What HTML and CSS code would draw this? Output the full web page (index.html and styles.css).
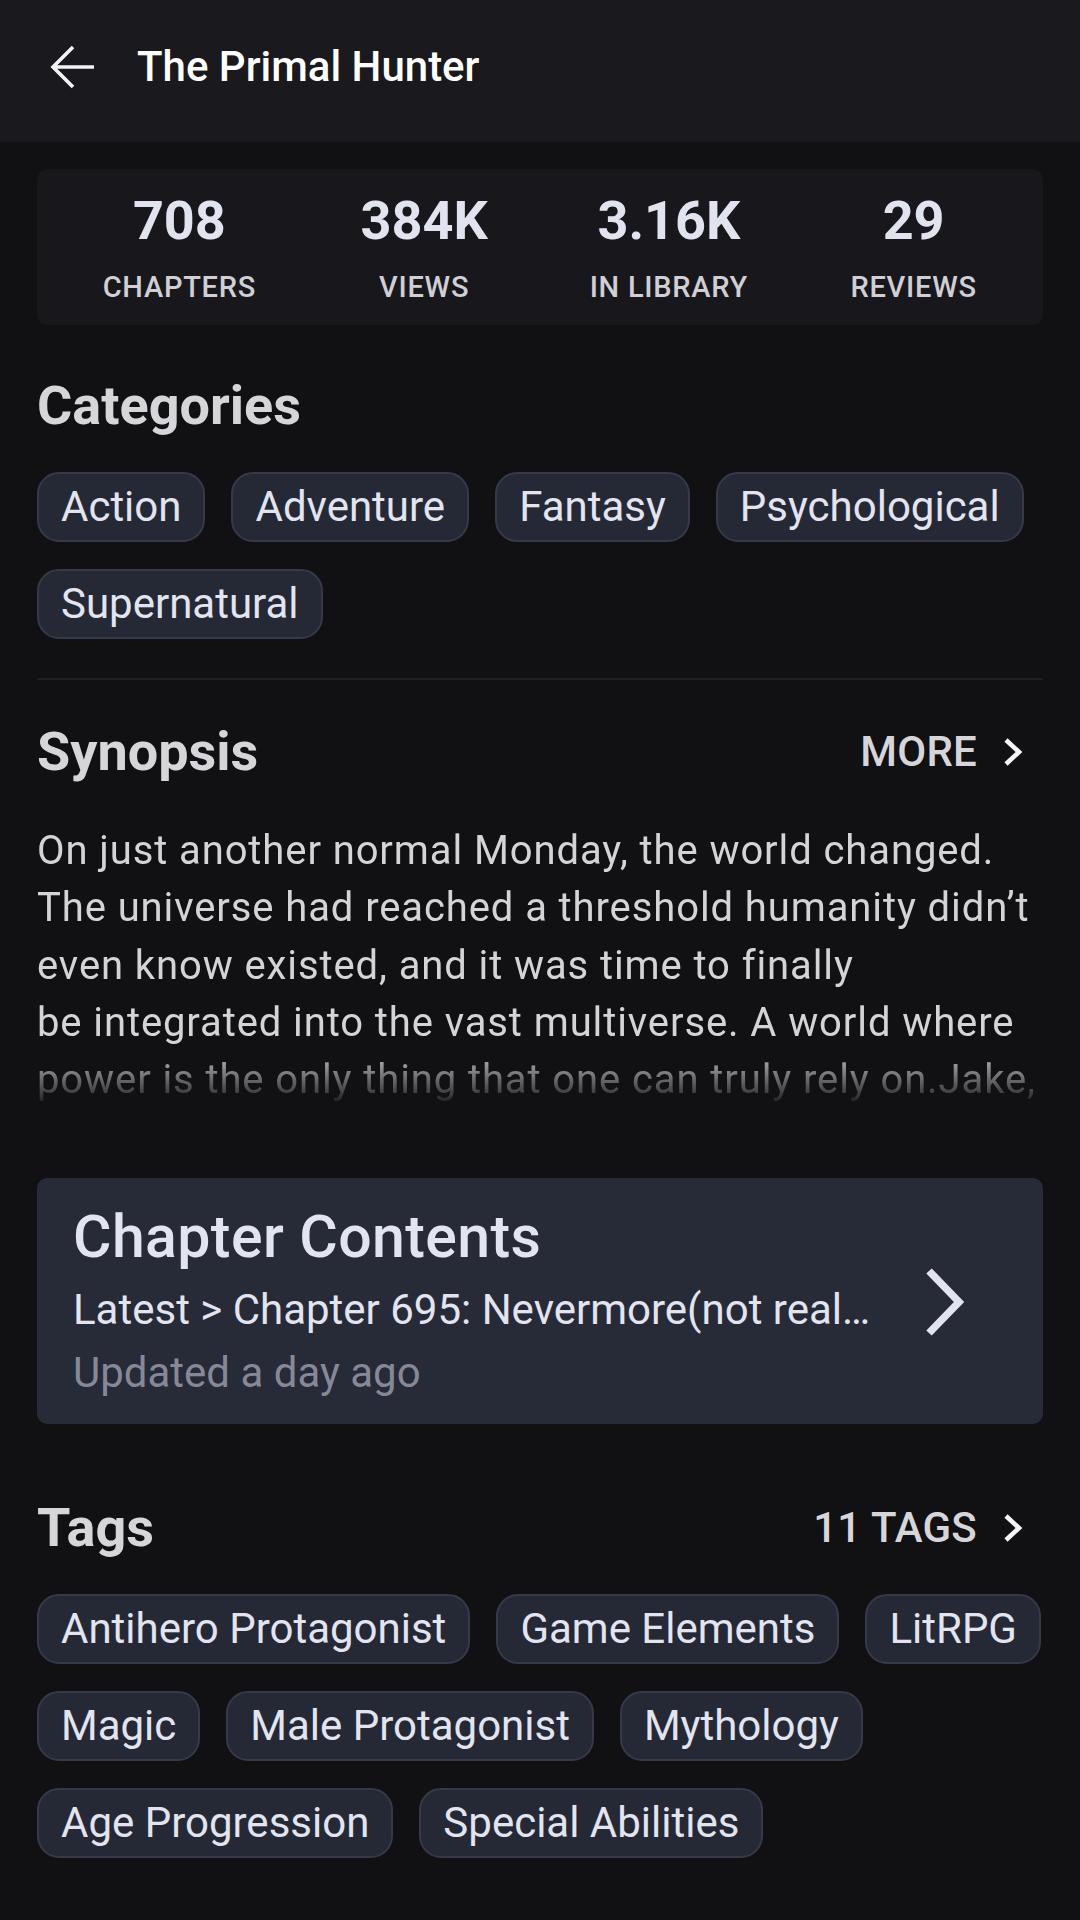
FILE: index.html
```html
<!DOCTYPE html>
<html lang="en">
<head>
<meta charset="utf-8">
<title>The Primal Hunter</title>
<link rel="stylesheet" href="styles.css">
</head>
<body>
<header class="topbar">
  <svg class="back" width="46" height="44" viewBox="0 0 46 44" aria-hidden="true">
    <path d="M3 22 H44 M23 2 L3 22 L23 42" fill="none" stroke="#f4f4f6" stroke-width="3.6" stroke-linejoin="miter"/>
  </svg>
  <h1 class="title">The Primal Hunter</h1>
</header>

<main class="content">
  <section class="stats">
    <div class="stat"><div class="num">708</div><div class="lbl">CHAPTERS</div></div>
    <div class="stat"><div class="num">384K</div><div class="lbl">VIEWS</div></div>
    <div class="stat"><div class="num">3.16K</div><div class="lbl">IN LIBRARY</div></div>
    <div class="stat"><div class="num">29</div><div class="lbl">REVIEWS</div></div>
  </section>

  <h2 class="heading cat-heading">Categories</h2>
  <div class="chips">
    <span class="chip">Action</span>
    <span class="chip">Adventure</span>
    <span class="chip">Fantasy</span>
    <span class="chip">Psychological</span>
    <span class="chip">Supernatural</span>
  </div>

  <hr class="divider">

  <div class="row-head syn-head">
    <h2 class="heading">Synopsis</h2>
    <a class="more">MORE
      <svg width="24" height="32" viewBox="0 0 24 32" aria-hidden="true"><path d="M5 4 L18 16 L5 28" fill="none" stroke="#f4f4f6" stroke-width="4.6"/></svg>
    </a>
  </div>
  <p class="synopsis">On just another normal Monday, the world changed.<br>The universe had reached a threshold humanity didn’t<br>even know existed, and it was time to finally<br>be integrated into the vast multiverse. A world where<br>power is the only thing that one can truly rely on.Jake,</p>

  <section class="chapters">
    <div class="ch-text">
      <div class="ch-title">Chapter Contents</div>
      <div class="ch-latest">Latest &gt; Chapter 695: Nevermore(not real…</div>
      <div class="ch-updated">Updated a day ago</div>
    </div>
    <svg class="ch-arrow" width="48" height="72" viewBox="0 0 48 72" aria-hidden="true"><path d="M8 5 L38 36 L8 67" fill="none" stroke="#e2e4f0" stroke-width="7.5"/></svg>
  </section>

  <div class="row-head tags-head">
    <h2 class="heading">Tags</h2>
    <a class="more">11 TAGS
      <svg width="24" height="32" viewBox="0 0 24 32" aria-hidden="true"><path d="M5 4 L18 16 L5 28" fill="none" stroke="#f4f4f6" stroke-width="4.6"/></svg>
    </a>
  </div>
  <div class="chips">
    <span class="chip">Antihero Protagonist</span>
    <span class="chip">Game Elements</span>
    <span class="chip">LitRPG</span>
    <span class="chip">Magic</span>
    <span class="chip">Male Protagonist</span>
    <span class="chip">Mythology</span>
    <span class="chip">Age Progression</span>
    <span class="chip">Special Abilities</span>
  </div>
</main>
</body>
</html>
```
FILE: styles.css
```css
* { box-sizing: border-box; }
html, body {
  margin: 0;
  padding: 0;
  background: #111013;
  font-family: Roboto, "Noto Sans", sans-serif;
  color: #e2e4f0;
}
body { width: 1080px; min-height: 1920px; }

.topbar {
  height: 142px;
  background: #1a191d;
  display: flex;
  align-items: center;
  padding: 0 0 8px 50px;
}
.back { display: block; flex: none; }
.title {
  margin: 0 0 0 41px;
  font-size: 42px;
  font-weight: 500;
  color: #ffffff;
  line-height: 48px;
}

.content { padding: 0 37px; }

.stats {
  margin-top: 27px;
  background: #18171b;
  border-radius: 10px;
  display: grid;
  grid-template-columns: repeat(4, 1fr);
  padding: 22px 7px 21px 20px;
}
.stat { text-align: center; }
.num {
  font-size: 54px;
  font-weight: 700;
  line-height: 60px;
  color: #e1e3ee;
}
.lbl {
  margin-top: 19px;
  font-size: 29px;
  font-weight: 500;
  letter-spacing: 0.75px;
  line-height: 34px;
  color: #cfcfd5;
}

.heading {
  margin: 0;
  font-size: 54px;
  font-weight: 700;
  line-height: 60px;
  color: #d6d6da;
}
.cat-heading { margin-top: 51px; }

.chips {
  margin-top: 36px;
  display: flex;
  flex-wrap: wrap;
  gap: 27px 26px;
}
.chip {
  display: inline-block;
  height: 70px;
  padding: 9px 22px;
  border: 2px solid #363a48;
  border-radius: 22px;
  background: #252935;
  font-size: 42px;
  line-height: 48px;
  color: #e2e4f0;
  white-space: nowrap;
}

.divider {
  margin: 39px 0 0;
  border: 0;
  height: 2px;
  background: #211f24;
}

.row-head {
  display: flex;
  align-items: center;
  justify-content: space-between;
}
.syn-head { margin-top: 42px; }
.tags-head { margin-top: 74px; }
.more {
  display: flex;
  align-items: center;
  gap: 24px;
  padding-right: 18px;
  font-size: 42px;
  font-weight: 500;
  letter-spacing: 0.2px;
  line-height: 48px;
  color: #d6d6da;
}
.more svg { display: block; }

.synopsis {
  margin: 40px 0 0;
  font-size: 40px;
  letter-spacing: 0.9px;
  line-height: 57.3px;
  color: #d4d4d8;
  white-space: nowrap;
  -webkit-mask-image: linear-gradient(to bottom, #000 0%, #000 78%, transparent 100%);
  mask-image: linear-gradient(to bottom, #000 0%, #000 78%, transparent 100%);
}

.chapters {
  margin-top: 70px;
  background: #272a37;
  border-radius: 10px;
  display: flex;
  align-items: center;
  padding: 26px 74px 25px 36px;
}
.ch-text { flex: 1; min-width: 0; }
.ch-title {
  font-size: 59px;
  font-weight: 500;
  letter-spacing: 0.4px;
  line-height: 66px;
  color: #e2e4f0;
}
.ch-latest {
  margin-top: 14px;
  font-size: 42px;
  line-height: 52px;
  color: #e2e4f0;
  white-space: nowrap;
  overflow: hidden;
  text-overflow: ellipsis;
}
.ch-updated {
  margin-top: 11px;
  font-size: 42px;
  line-height: 52px;
  color: #858997;
}
.ch-arrow { display: block; flex: none; margin-left: 40px; }
```
